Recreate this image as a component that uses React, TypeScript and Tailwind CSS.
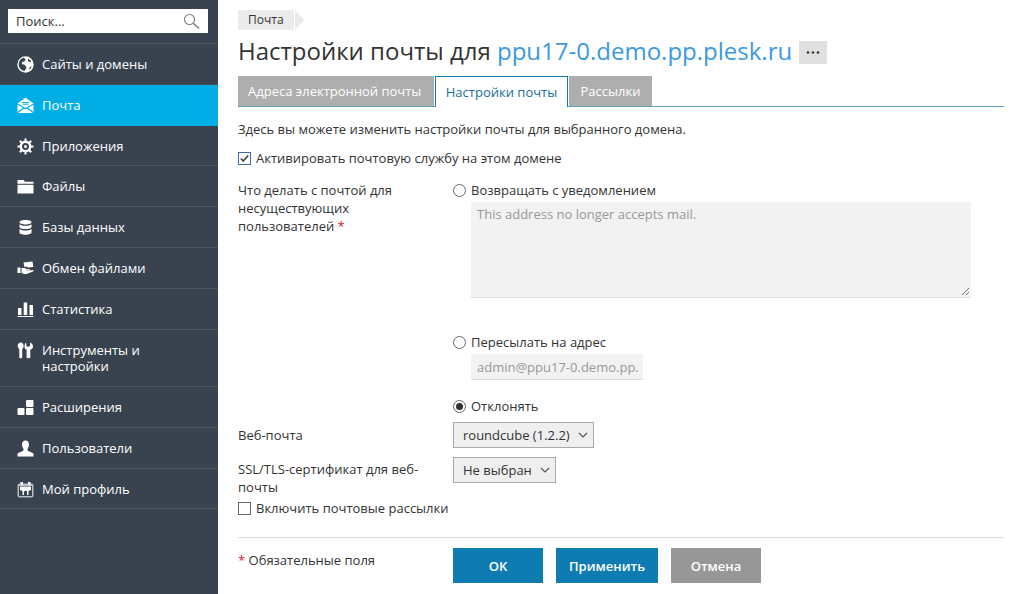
import type { ReactNode } from "react"

const font = { fontFamily: '"Open Sans", sans-serif' }

function Globe() {
  return (
    <svg width="17" height="17" viewBox="0 0 17 17">
      <circle cx="8.500" cy="8.500" r="8.200" fill="#fff" />
      <path d="M2 6.500C2.500 4 4.500 2 7 1.700L8.500 3.200 7.500 5.500 5 6 4.800 8 7.500 8.800 9.500 11 8.800 13 7.500 15C4.500 14.500 2 12 1.700 9Z" fill="#39434f" />
      <path d="M11 2.500 14.200 5 13.500 6.300 11 5.200ZM13 11 14.700 10.500 13.300 13 11.800 13.500Z" fill="#39434f" />
    </svg>
  )
}

function MailOpen() {
  return (
    <svg width="17" height="17" viewBox="0 0 17 17" fill="#fff">
      <path d="M8.500 0.800 16.500 6.500 8.500 11 0.500 6.500Z" />
      <path d="M0.500 7.800 6 10.800 0.500 15ZM16.500 7.800 11 10.800 16.500 15ZM1 16 7 11.700 8.500 12.500 10 11.700 16 16Z" />
      <path d="M4.800 5.500h7.400M5.800 7.200h5.400" stroke="#00ade5" strokeWidth="1" />
    </svg>
  )
}

function Gear() {
  return (
    <svg width="17" height="17" viewBox="0 0 17 17" fill="none" stroke="#fff">
      <circle cx="8.500" cy="8.500" r="4.700" strokeWidth="2.400" />
      <circle cx="8.500" cy="8.500" r="1.500" fill="#fff" stroke="none" />
      <path d="M8.500 0.500v2.500M8.500 14v2.500M0.500 8.500H3M14 8.500h2.500M2.800 2.800l1.900 1.900M12.300 12.300l1.900 1.900M14.200 2.800l-1.900 1.900M4.700 12.300l-1.900 1.900" strokeWidth="2" />
    </svg>
  )
}

function Folder() {
  return (
    <svg width="17" height="17" viewBox="0 0 17 17" fill="#fff">
      <path d="M0.500 2h6l1.500 1.800h8.500v2H0.500Z" />
      <path d="M0.500 6.800h16v8.700h-16Z" />
    </svg>
  )
}

function Database() {
  return (
    <svg width="17" height="17" viewBox="0 0 17 17" fill="#fff">
      <path d="M2.500 3.200C2.500 1.800 5.200 1 8.500 1S14.500 1.800 14.500 3.200 11.800 5.400 8.500 5.400 2.500 4.600 2.500 3.200Z" />
      <path d="M2.500 5.200C4 6.300 6.200 6.700 8.500 6.700S13 6.300 14.500 5.200V8c0 1.200-2.700 2.100-6 2.100S2.500 9.200 2.500 8Z" />
      <path d="M2.500 10c1.500 1.100 3.700 1.500 6 1.500S13 11.100 14.500 10v3.500c0 1.300-2.700 2.200-6 2.200S2.500 14.800 2.500 13.500Z" />
    </svg>
  )
}

function Share() {
  return (
    <svg width="17" height="17" viewBox="0 0 17 17" fill="#fff">
      <path d="M6.500 2.500 15.500 1.500 16.300 7 11 7.600 9.800 6.800 7.300 6.800Z" />
      <path d="M0.500 7.500H3.500V13H0.500ZM4.500 8h3.300l2 1.200h2.700c.8 0 .8 1.300 0 1.300H9.700v.6l6.300-1c.8 0 .8 1.100 0 1.400L9.500 14H7L4.500 12.800Z" />
    </svg>
  )
}

function Bars() {
  return (
    <svg width="17" height="17" viewBox="0 0 17 17" fill="#fff">
      <path d="M1 7h3.500v7H1ZM6.700 1.500h3.500V14H6.700ZM12.500 4H16v10h-3.500ZM0.500 15h16v1h-16Z" />
    </svg>
  )
}

function Tools() {
  return (
    <svg width="17" height="17" viewBox="0 0 17 17" fill="#fff">
      <path d="M3.700 0.500C5.500 0.500 6.700 2 6.700 3.800 6.700 5.500 5.700 6.500 5.200 7.500V15.500C5.200 16.600 2.300 16.600 2.300 15.500V7.500C1.700 6.500 0.700 5.500 0.700 3.800 0.700 2 2 0.500 3.700 0.500Z" />
      <path d="M9.300 0.500V3.800L11.200 5 13.100 3.800V0.500C14.900 1.200 16 2.800 16 4.500 16 6.200 14.800 7.200 13.300 7.800V15.500C13.300 16.600 9.600 16.600 9.600 15.500V7.800C8 7.200 7.500 6 7.500 4.500 7.500 2.800 8 1.200 9.300 0.500Z" />
    </svg>
  )
}

function Blocks() {
  return (
    <svg width="17" height="17" viewBox="0 0 17 17" fill="#fff">
      <rect x="0.500" y="9" width="7" height="7" rx="1" />
      <rect x="9" y="9" width="7.500" height="7" rx="1" />
      <rect x="9" y="1" width="7.500" height="7" rx="1" />
    </svg>
  )
}

function User() {
  return (
    <svg width="17" height="17" viewBox="0 0 17 17" fill="#fff">
      <path d="M8.500 0.500C10.800 0.500 12 2.200 12 4.500 12 6.500 11 8 10.500 9V10.500L16.500 13.500V16.500H0.500V13.500L6.500 10.500V9C6 8 5 6.500 5 4.500 5 2.200 6.200 0.500 8.500 0.500Z" />
    </svg>
  )
}

function Profile() {
  return (
    <svg width="17" height="17" viewBox="0 0 17 17">
      <rect x="0.500" y="2.500" width="16" height="14" rx="2" fill="#b9bec4" />
      <rect x="2" y="5" width="13" height="10" fill="#39434f" />
      <rect x="3.500" y="1" width="2.500" height="3" fill="#fff" />
      <rect x="11" y="1" width="2.500" height="3" fill="#fff" />
      <path d="M3 5.500h11v3.500l-2.500 1v4h-1.500v-3.500l-1.500-1-1.500 1v3.500H5.500v-4L3 9Z" fill="#fff" />
    </svg>
  )
}

const navItems: { label: ReactNode; icon: ReactNode; active?: boolean; tall?: boolean }[] = [
  { label: "Сайты и домены", icon: <Globe /> },
  { label: "Почта", icon: <MailOpen />, active: true },
  { label: "Приложения", icon: <Gear /> },
  { label: "Файлы", icon: <Folder /> },
  { label: "Базы данных", icon: <Database /> },
  { label: "Обмен файлами", icon: <Share /> },
  { label: "Статистика", icon: <Bars /> },
  { label: <>Инструменты и<br />настройки</>, icon: <Tools />, tall: true },
  { label: "Расширения", icon: <Blocks /> },
  { label: "Пользователи", icon: <User /> },
  { label: "Мой профиль", icon: <Profile /> },
]

function Sidebar() {
  return (
    <aside className="w-[218px] shrink-0 bg-[#39434f] text-white">
      <div className="border-b border-[#4b5560] pt-[9px] pb-[10px] pl-2">
        <div className="flex h-6 w-[200px] items-center justify-between bg-white pr-2 pl-2 text-[#333]">
          <span>Поиск...</span>
          <svg width="17" height="17" viewBox="0 0 17 17" fill="none" stroke="#7d7d7d">
            <circle cx="6.500" cy="6.500" r="5" strokeWidth="1.100" />
            <path d="M10.500 10.500 16 15.500" strokeWidth="1.600" />
          </svg>
        </div>
      </div>
      {navItems.map((item, i) => (
        <div
          key={i}
          className={`flex gap-2 px-[17px] pt-3 leading-4 ${item.tall ? "h-[57.4px]" : "h-[40.8px]"} ${
            item.active ? "bg-[#00ade5]" : "border-b border-[#4b5560]"
          }`}
        >
          <span className="w-[17px] shrink-0">{item.icon}</span>
          <span>{item.label}</span>
        </div>
      ))}
    </aside>
  )
}

function Radio({ checked }: { checked?: boolean }) {
  return (
    <span className="flex size-[13px] shrink-0 items-center justify-center rounded-full border border-[#666] bg-white">
      {checked && <span className="size-[7px] rounded-full bg-[#333]" />}
    </span>
  )
}

function Select({ value, className }: { value: string; className: string }) {
  return (
    <div className={`flex h-[26px] items-center justify-between border border-[#aaa] bg-[#efefef] pr-[5px] pl-[9px] text-[#333] ${className}`}>
      <span>{value}</span>
      <svg width="10" height="6" viewBox="0 0 10 6" fill="none" stroke="#555" strokeWidth="1.200">
        <path d="M1 1l4 4 4-4" />
      </svg>
    </div>
  )
}

function Button({ children, className }: { children: ReactNode; className: string }) {
  return (
    <div className={`flex h-[35px] items-center justify-center font-semibold text-white ${className}`}>{children}</div>
  )
}

export default function App() {
  return (
    <div className="flex h-[594px] w-[1014px] overflow-hidden bg-white text-[13px] leading-[18px] text-[#333]" style={font}>
      <Sidebar />
      <main className="flex-1 pt-[10px] pr-[10px] pl-5">
        <div className="flex h-5 items-center">
          <span className="flex h-5 items-center bg-[#ebebeb] px-[10px] text-[12px]">Почта</span>
          <span className="ml-px h-0 w-0 border-y-[10px] border-l-[9px] border-y-transparent border-l-[#ebebeb]" />
        </div>
        <div className="mt-[5px] flex h-[32px] items-center">
          <h1 className="text-[24px] leading-8 font-normal text-[#333]">
            Настройки почты для <span className="text-[#3b99e0]">ppu17-0.demo.pp.plesk.ru</span>
          </h1>
          <span className="mt-[3px] ml-[7px] flex h-[23px] w-7 items-center justify-center bg-[#e0e0e0] text-[#333]">
            <svg width="14" height="3" viewBox="0 0 14 3" fill="#333">
              <circle cx="2" cy="1.500" r="1.300" />
              <circle cx="7" cy="1.500" r="1.300" />
              <circle cx="12" cy="1.500" r="1.300" />
            </svg>
          </span>
        </div>
        <div className="mt-[9px] flex h-[31px] gap-px border-b border-[#5ba3c7]">
          <div className="flex h-[30px] w-[196px] items-center bg-[#aeaeae] pl-[10px] text-white">Адреса электронной почты</div>
          <div className="flex h-[31px] w-[133px] items-center justify-center border-x border-t border-[#0f7cb0] bg-white text-[#1a6f9c]">Настройки почты</div>
          <div className="flex h-[30px] w-[83px] items-center justify-center bg-[#aeaeae] text-white">Рассылки</div>
        </div>
        <p className="mt-[13px]">Здесь вы можете изменить настройки почты для выбранного домена.</p>
        <label className="mt-[11px] flex items-center gap-[5px]">
          <svg width="13" height="13" viewBox="0 0 13 13" className="shrink-0">
            <rect x="0.500" y="0.500" width="12" height="12" fill="#fff" stroke="#3f6fa8" />
            <path d="M2.800 6.500 5.300 9 10.200 3.500" fill="none" stroke="#333" strokeWidth="1.500" />
          </svg>
          Активировать почтовую службу на этом домене
        </label>

        <div className="mt-[14px] grid grid-cols-[215px_1fr]">
          <div className="w-[190px]">
            Что делать с почтой для несуществующих пользователей <span className="text-[#c8202f]">*</span>
          </div>
          <div>
            <div className="flex items-center gap-[5px]"><Radio />Возвращать с уведомлением</div>
            <div className="relative mt-[3px] ml-[18px] h-[96px] w-[500px] border-b border-[#ddd] bg-[#f2f2f2] px-[6px] py-[3px] text-[#999]">
              This address no longer accepts mail.
              <svg width="9" height="9" viewBox="0 0 9 9" className="absolute right-px bottom-px" stroke="#777">
                <path d="M8 1 1 8M8 5 5 8" />
              </svg>
            </div>
            <div className="mt-[35px] flex items-center gap-[5px]"><Radio />Пересылать на адрес</div>
            <div className="mt-[3px] ml-[18px] flex h-[26px] w-[172px] items-center overflow-hidden border-b border-[#ddd] bg-[#f2f2f2] pl-[6px] whitespace-nowrap text-[#999]">admin@ppu17-0.demo.pp.</div>
            <div className="mt-[17px] flex items-center gap-[5px]"><Radio checked />Отклонять</div>
          </div>
        </div>

        <div className="mt-[7px] grid grid-cols-[215px_1fr] items-start">
          <div className="pt-[4px]">Веб-почта</div>
          <Select value="roundcube (1.2.2)" className="w-[141px]" />
        </div>
        <div className="mt-[9px] grid grid-cols-[215px_1fr] items-start">
          <div className="w-[190px] pt-[3px]">SSL/TLS-сертификат для веб-почты</div>
          <Select value="Не выбран" className="w-[103px]" />
        </div>
        <label className="mt-[3px] flex items-center gap-[5px]">
          <span className="size-[13px] shrink-0 border border-[#666] bg-white" />
          Включить почтовые рассылки
        </label>

        <div className="mt-[20px] grid grid-cols-[215px_1fr] border-t border-[#ddd] pt-[10px]">
          <div className="pt-[3px]"><span className="text-[#c8202f]">*</span> Обязательные поля</div>
          <div className="flex gap-[13px]">
            <Button className="w-[90px] bg-[#0e7cb0]">OK</Button>
            <Button className="w-[102px] bg-[#0e7cb0]">Применить</Button>
            <Button className="w-[90px] bg-[#979797]">Отмена</Button>
          </div>
        </div>
      </main>
    </div>
  )
}
